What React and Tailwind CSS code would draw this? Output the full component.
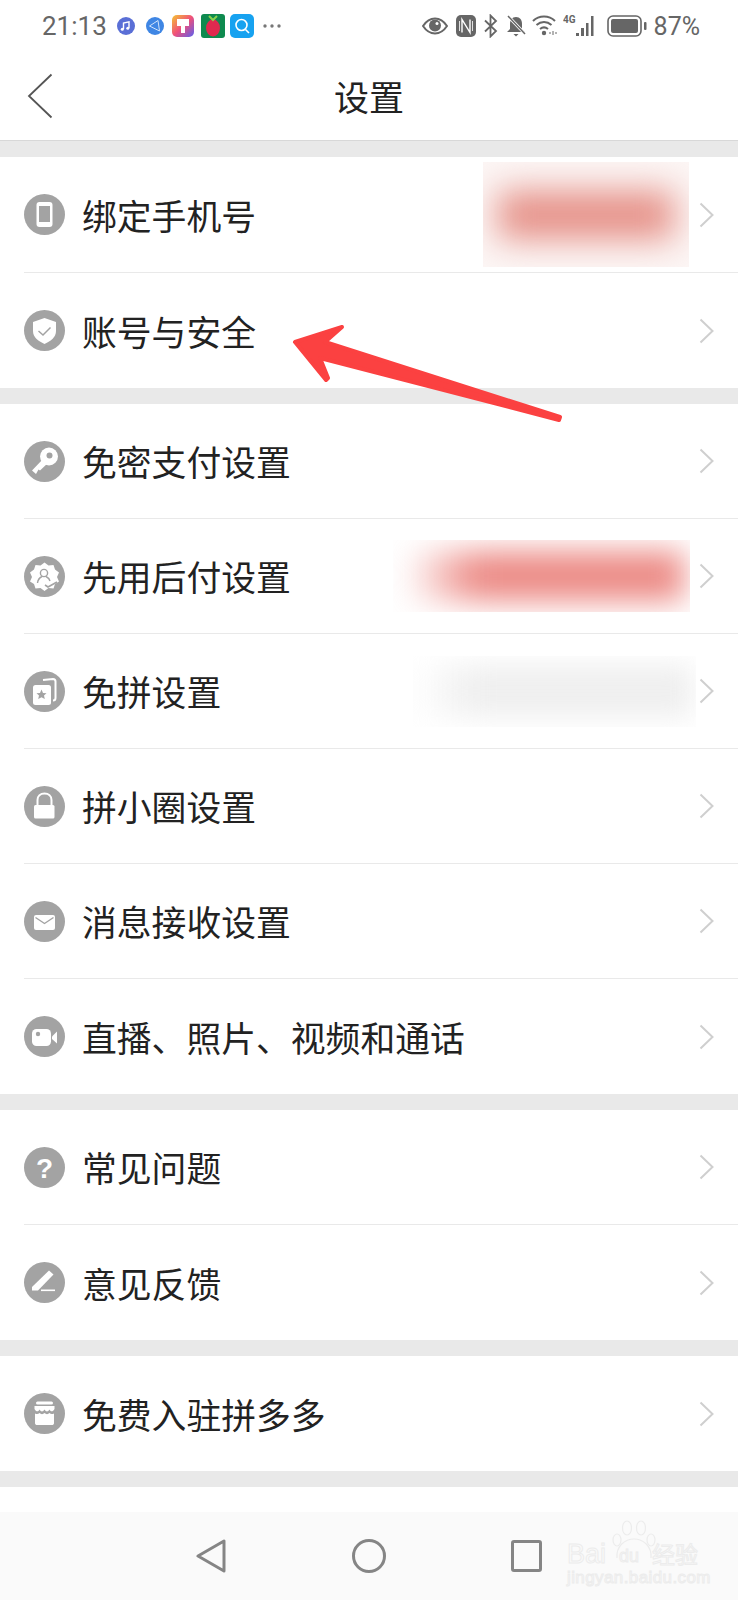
import React from 'react';

const FONT = "font-['Noto_Sans_CJK_SC','Noto_Sans',sans-serif]";

// white glyphs on the grey disc, all on a 41x41 grid
const G = '#a3a3a3';

const PhoneGlyph = () => (
  <>
    <rect x="12.5" y="8" width="16" height="25" rx="3" fill="#fff" />
    <rect x="15" y="12" width="11" height="16" fill={G} />
  </>
);

const ShieldGlyph = () => (
  <>
    <path d="M20.5 8 L32 12 V21 C32 27 27 31 20.5 34 C14 31 9 27 9 21 V12 Z" fill="#fff" />
    <path d="M14.5 21 L19 25 L26.5 17.5" fill="none" stroke={G} strokeWidth="1.5" />
  </>
);

const KeyGlyph = () => (
  <>
    <circle cx="25" cy="15.5" r="9" fill="#fff" />
    <circle cx="25.5" cy="14.5" r="3" fill={G} />
    <path d="M20 17 L24.5 21.5 L16 29.5 L14.5 28.5 L12 33 L8 29.5 Z" fill="#fff" />
  </>
);

const BadgeGlyph = () => (
  <>
    <path d="M20.5 6.5 L24.5 9.5 L29.5 9 L31 13.5 L35 16.5 L33 21 L35 25.5 L31 28 L29.5 32.5 L24.5 32 L20.5 35 L16.5 32 L11.5 32.5 L10 28 L6 25.5 L8 21 L6 16.5 L10 13.5 L11.5 9 L16.5 9.5 Z" fill="#fff" />
    <circle cx="20" cy="17" r="3.6" fill="none" stroke={G} strokeWidth="1.4" />
    <path d="M13.5 27 C14 22.5 17 21 18 20.5 M22 20.5 C24 21.5 25.5 23 26 25" fill="none" stroke={G} strokeWidth="1.4" />
    <path d="M21 29 L24 31 L33 26" fill="none" stroke={G} strokeWidth="1.6" />
  </>
);

const CardsGlyph = () => (
  <>
    <path d="M19 9 L29 8 C30.5 8 31.5 9 31.5 10.5 V27 C31.5 28.5 30.5 29.5 29 29.5" fill="none" stroke="#fff" strokeWidth="2" />
    <rect x="9" y="14" width="18" height="20" rx="2.5" fill="#fff" />
    <path d="M17.5 18.5 L19 22 L22.5 22.3 L20 24.6 L20.8 28 L17.5 26.2 L14.2 28 L15 24.6 L12.5 22.3 L16 22 Z" fill={G} />
  </>
);

const LockGlyph = () => (
  <>
    <path d="M13.5 21 V14 C13.5 10 16.5 7.5 20.5 7.5 C24.5 7.5 27.5 10 27.5 14 V21" fill="none" stroke="#fff" strokeWidth="2" />
    <rect x="10" y="19" width="20.5" height="13.5" rx="1.5" fill="#fff" />
  </>
);

const MailGlyph = () => (
  <>
    <rect x="10" y="14" width="21" height="15" rx="2" fill="#fff" />
    <path d="M11.5 16.5 L20.5 22.5 L29.5 16.5" fill="none" stroke={G} strokeWidth="1.4" />
  </>
);

const VideoGlyph = () => (
  <>
    <rect x="8" y="13" width="19" height="17" rx="4.5" fill="#fff" />
    <circle cx="14" cy="18" r="2.2" fill={G} />
    <path d="M28 20.5 L33 15.5 V27.5 L28 23 Z" fill="#fff" />
  </>
);

const QuestionGlyph = () => (
  <text x="20.5" y="30.5" textAnchor="middle" fontFamily="'Liberation Sans',sans-serif" fontWeight="700" fontSize="28" fill="#fff">?</text>
);

const PencilGlyph = () => (
  <>
    <path d="M25 8.5 L29.5 12.5 L14 28.5 H8 V25 Z" fill="#fff" />
    <rect x="17" y="27.5" width="14" height="1.6" fill="#fff" />
  </>
);

const StoreGlyph = () => (
  <>
    <rect x="12" y="8.5" width="17" height="3" rx="1.5" fill="#fff" />
    <path d="M10.5 13 H30.5 V16 C29 19 26.5 19 25.5 16.5 C24 19 22 19 20.5 16.5 C19 19 17 19 15.5 16.5 C14.5 19 12 19 10.5 16 Z" fill="#fff" />
    <path d="M11 20.5 C13 21.5 14.5 21 15.5 20 C17 21.5 19 21.5 20.5 20 C22 21.5 24 21.5 25.5 20 C26.5 21 28 21.5 30 20.5 V30 C30 31.5 29 32 28 32 H13 C12 32 11 31.5 11 30 Z" fill="#fff" />
  </>
);

const groups = [
  [
    { label: '绑定手机号', icon: PhoneGlyph, blur: 'phone', tall: true },
    { label: '账号与安全', icon: ShieldGlyph },
  ],
  [
    { label: '免密支付设置', icon: KeyGlyph },
    { label: '先用后付设置', icon: BadgeGlyph, blur: 'pay' },
    { label: '免拼设置', icon: CardsGlyph, blur: 'grey' },
    { label: '拼小圈设置', icon: LockGlyph },
    { label: '消息接收设置', icon: MailGlyph },
    { label: '直播、照片、视频和通话', icon: VideoGlyph },
  ],
  [
    { label: '常见问题', icon: QuestionGlyph },
    { label: '意见反馈', icon: PencilGlyph },
  ],
  [{ label: '免费入驻拼多多', icon: StoreGlyph }],
];

// the smudged-out values on the right of some rows
const BlurBox = ({ kind }) => {
  if (kind === 'phone') {
    return (
      <div className="ml-auto mr-[10px] flex h-[105px] w-[206px] items-center justify-center overflow-hidden bg-[#fcf6f5]">
        <div className="h-[48px] w-[176px] bg-[#e58f86] blur-[17px]" />
      </div>
    );
  }
  if (kind === 'pay') {
    return (
      <div className="ml-auto mr-[9px] flex h-[72px] w-[297px] items-center justify-end overflow-hidden">
        <div className="mr-[6px] h-[50px] w-[280px] bg-[linear-gradient(to_right,transparent,#ec8b86_26%,#ec8b86)] blur-[15px]" />
      </div>
    );
  }
  return (
    <div className="ml-auto mr-[3px] flex h-[71px] w-[283px] items-center justify-end overflow-hidden">
      <div className="mr-[4px] h-[52px] w-[285px] bg-[linear-gradient(to_right,transparent,#efefef_22%,#efefef)] blur-[13px]" />
    </div>
  );
};

const Row = ({ item, last }) => {
  const Glyph = item.icon;
  return (
    <div className={`ml-6 ${item.tall ? 'h-[116px]' : 'h-[115px]'}`}>
      <div className={`flex h-full items-center pr-[24px] ${last ? '' : 'border-b border-[#e9e9e9]'}`}>
        <svg viewBox="0 0 41 41" className="h-[41px] w-[41px] shrink-0">
          <circle cx="20.5" cy="20.5" r="20.5" fill={G} />
          <Glyph />
        </svg>
        <span className="mt-px ml-[17px] text-[34.8px] leading-none whitespace-nowrap text-[#222]">{item.label}</span>
        {item.blur && <BlurBox kind={item.blur} />}
        <svg viewBox="0 0 15 26" className={`h-[26px] w-[15px] shrink-0 ${item.blur ? '' : 'ml-auto'}`}>
          <path d="M1.5 1.5 L13.5 13 L1.5 24.5" fill="none" stroke="#cfcfcf" strokeWidth="2" />
        </svg>
      </div>
    </div>
  );
};

const NotifIcons = () => (
  <div className="ml-[9px] flex items-center">
    <svg viewBox="0 0 20 20" className="h-5 w-5">
      <circle cx="10" cy="10" r="9" fill="#5a6fd6" />
      <path d="M7.5 13 V7 L13 5.8 V12" fill="none" stroke="#fff" strokeWidth="1.4" />
      <circle cx="6.3" cy="13.2" r="1.5" fill="#fff" />
      <circle cx="11.8" cy="12.2" r="1.5" fill="#fff" />
    </svg>
    <svg viewBox="0 0 20 20" className="ml-[9px] h-5 w-5">
      <circle cx="10" cy="10" r="9" fill="#3f86e4" />
      <path d="M4.5 10 L13 4.5 L14.5 15 Z" fill="none" stroke="#cfe2fb" strokeWidth="1" />
    </svg>
    <svg viewBox="0 0 22 22" className="ml-[7px] h-[22px] w-[22px]">
      <defs>
        <linearGradient id="paint" x1="0" y1="0" x2="1" y2="1">
          <stop offset="0" stopColor="#f5c530" />
          <stop offset="0.5" stopColor="#f0507a" />
          <stop offset="1" stopColor="#5a5ff0" />
        </linearGradient>
      </defs>
      <rect width="22" height="22" rx="5" fill="url(#paint)" />
      <path d="M5 4 H17 V11 H13 V18 H9 V11 H5 Z" fill="#fff" />
    </svg>
    <svg viewBox="0 0 24 24" className="ml-[7px] h-6 w-6">
      <rect width="24" height="24" rx="3" fill="#0e8a4f" />
      <ellipse cx="12" cy="14" rx="7" ry="8.5" fill="#e0294f" />
      <path d="M8 2 L12 6 L16 2" fill="none" stroke="#8bd34e" strokeWidth="2" />
    </svg>
    <svg viewBox="0 0 24 24" className="ml-[5px] h-6 w-6">
      <rect width="24" height="24" rx="5" fill="#17a2f0" />
      <circle cx="11.5" cy="11" r="5.5" fill="none" stroke="#fff" strokeWidth="1.6" />
      <path d="M15.5 15.5 L19 19" stroke="#fff" strokeWidth="1.6" />
    </svg>
    <svg viewBox="0 0 18 4" className="ml-[9px] h-1 w-[18px]">
      <circle cx="2" cy="2" r="1.7" fill="#777" />
      <circle cx="9" cy="2" r="1.7" fill="#777" />
      <circle cx="16" cy="2" r="1.7" fill="#777" />
    </svg>
  </div>
);

const SystemIcons = () => (
  <div className="ml-auto flex items-center text-[#666]">
    <svg viewBox="0 0 26 18" className="h-[18px] w-[26px]">
      <path d="M1 9 C5 3 9 1.5 13 1.5 C17 1.5 21 3 25 9 C21 15 17 16.5 13 16.5 C9 16.5 5 15 1 9 Z" fill="none" stroke="#666" strokeWidth="2" />
      <circle cx="13" cy="8.5" r="6" fill="#666" />
      <circle cx="15" cy="6.5" r="1.5" fill="#fff" />
    </svg>
    <svg viewBox="0 0 20 22" className="ml-2 h-[22px] w-5">
      <rect width="20" height="22" rx="5" fill="#666" />
      <path d="M6 17.5 V4.5 L14 17.5 V4.5" fill="none" stroke="#fff" strokeWidth="1.4" />
      <path d="M3.5 6 V16 M16.5 6 V16" stroke="#fff" strokeWidth="0.8" />
    </svg>
    <svg viewBox="0 0 15 24" className="ml-[7px] h-6 w-[15px]">
      <path d="M2 6.5 L13 17 L7.5 22.5 V1.5 L13 7 L2 17.5" fill="none" stroke="#666" strokeWidth="1.8" />
    </svg>
    <svg viewBox="0 0 20 22" className="ml-2 h-[22px] w-5">
      <path d="M10 2 C14 2 16 5 16 9 V14 L19 17 H1 L4 14 V9 C4 5 6 2 10 2 Z" fill="#666" />
      <path d="M7.5 19 H12.5 L10 21.5 Z" fill="#666" />
      <path d="M2 1 L19 19" stroke="#fff" strokeWidth="3" />
      <path d="M2 1 L19 19" stroke="#666" strokeWidth="1.5" />
    </svg>
    <svg viewBox="0 0 25 22" className="ml-[6px] h-[22px] w-[25px]">
      <path d="M1 6 C7 0 17 0 23 6 M4.5 10 C9 6 15 6 19.5 10 M8 14 C10.5 12 13.5 12 16 14" fill="none" stroke="#666" strokeWidth="2" />
      <circle cx="12" cy="18" r="2.2" fill="#666" />
      <path d="M17 18 H19 M21 16 V20 M23 18 H25" stroke="#666" strokeWidth="1" />
    </svg>
    <svg viewBox="0 0 35 24" className="ml-[6px] h-6 w-[35px]">
      <text x="0" y="9" fontFamily="'Roboto',sans-serif" fontSize="10" fontWeight="700" fill="#666">4G</text>
      <rect x="13" y="19" width="3" height="3" fill="#666" />
      <rect x="18" y="14" width="3" height="8" fill="#666" />
      <rect x="23" y="9" width="2.5" height="13" fill="#666" />
      <rect x="28" y="2" width="2.5" height="20" fill="#666" />
    </svg>
    <svg viewBox="0 0 40 22" className="ml-[9px] h-[22px] w-10">
      <rect x="1" y="1" width="33" height="20" rx="5" fill="none" stroke="#666" strokeWidth="1.6" />
      <rect x="4" y="4" width="27" height="14" rx="2" fill="#666" />
      <rect x="37" y="7" width="2.5" height="8" rx="1" fill="#666" />
    </svg>
    <span className="ml-[7px] font-['Roboto',sans-serif] text-[25px] leading-none">87%</span>
  </div>
);

const BaiduMark = () => (
  <div className="relative ml-[25px] h-[70px] w-[132px] text-transparent [-webkit-text-stroke:1px_#ececec]">
    <svg viewBox="0 0 46 40" className="absolute top-[-1px] left-[44px] h-10 w-[46px]">
      <g fill="none" stroke="#ececec" strokeWidth="1.2">
        <ellipse cx="6" cy="20" rx="4" ry="6" />
        <ellipse cx="16" cy="8" rx="4.5" ry="7" />
        <ellipse cx="30" cy="8" rx="4.5" ry="7" />
        <ellipse cx="40" cy="20" rx="4" ry="6" />
        <path d="M6 38 C5 26 14 19 23 19 C32 19 41 26 40 38" />
      </g>
    </svg>
    <div className="absolute top-[20px] left-0 font-['Liberation_Sans',sans-serif] text-[27px] leading-none">Bai</div>
    <div className="absolute top-[26px] left-[52px] font-['Liberation_Sans',sans-serif] text-[18px] leading-none">du</div>
    <div className="absolute top-[21px] left-[85px] font-['Noto_Sans_CJK_SC',sans-serif] text-[23px] leading-none whitespace-nowrap">经验</div>
    <div className="absolute top-[48px] left-0 font-['Liberation_Sans',sans-serif] text-[17px] leading-none tracking-[0.4px] whitespace-nowrap">
      jingyan.baidu.com
    </div>
  </div>
);

const App = () => {
  return (
    <div className={`relative flex h-[1600px] w-[738px] flex-col overflow-hidden bg-white ${FONT}`}>
      {/* status bar */}
      <div className="flex h-[52px] shrink-0 items-center pr-[38px] pl-[42px]">
        <span className="font-['Roboto',sans-serif] text-[26px] leading-none text-[#666]">21:13</span>
        <NotifIcons />
        <SystemIcons />
      </div>

      {/* title bar */}
      <div className="relative flex h-[88px] shrink-0 items-center justify-center pb-[2px]">
        <svg viewBox="0 0 26 46" className="absolute top-[21px] left-[27px] h-[46px] w-[26px]">
          <path d="M24.5 1.5 L2 23 L24.5 44.5" fill="none" stroke="#555" strokeWidth="1.8" />
        </svg>
        <span className="text-[35px] leading-none text-[#222]">设置</span>
      </div>
      <div className="h-px shrink-0 bg-[#d8d8d8]" />

      {groups.map((rows, i) => (
        <div key={i}>
          <div className="h-4 bg-[#e9e9e9]" />
          {rows.map((item, j) => (
            <Row key={item.label} item={item} last={j === rows.length - 1} />
          ))}
        </div>
      ))}
      <div className="h-4 shrink-0 bg-[#e9e9e9]" />

      <div className="h-[25px] shrink-0" />

      {/* android nav bar */}
      <div className="flex flex-1 items-center bg-[#fafafa] pl-[196px]">
        <svg viewBox="0 0 30 34" className="h-[34px] w-[30px]">
          <path d="M2 17 L28 2 V32 Z" fill="none" stroke="#858585" strokeWidth="3" strokeLinejoin="round" />
        </svg>
        <svg viewBox="0 0 34 34" className="ml-[126px] h-[34px] w-[34px]">
          <circle cx="17" cy="17" r="15.5" fill="none" stroke="#858585" strokeWidth="3" />
        </svg>
        <svg viewBox="0 0 31 32" className="ml-[125px] h-8 w-[31px]">
          <rect x="1.5" y="1.5" width="28" height="29" rx="1.5" fill="none" stroke="#858585" strokeWidth="3" />
        </svg>
        <BaiduMark />
      </div>

      {/* red annotation arrow */}
      <svg viewBox="0 0 275 105" className="absolute top-[320px] left-[290px] h-[105px] w-[275px]">
        <path
          d="M5 22 L52 7 L35 22 L270 97 L269 100 L30 38 L38 58 L36 60 Z"
          fill="#fb4141"
          stroke="#fb4141"
          strokeWidth="4"
          strokeLinejoin="round"
        />
      </svg>
    </div>
  );
};

export default App;
